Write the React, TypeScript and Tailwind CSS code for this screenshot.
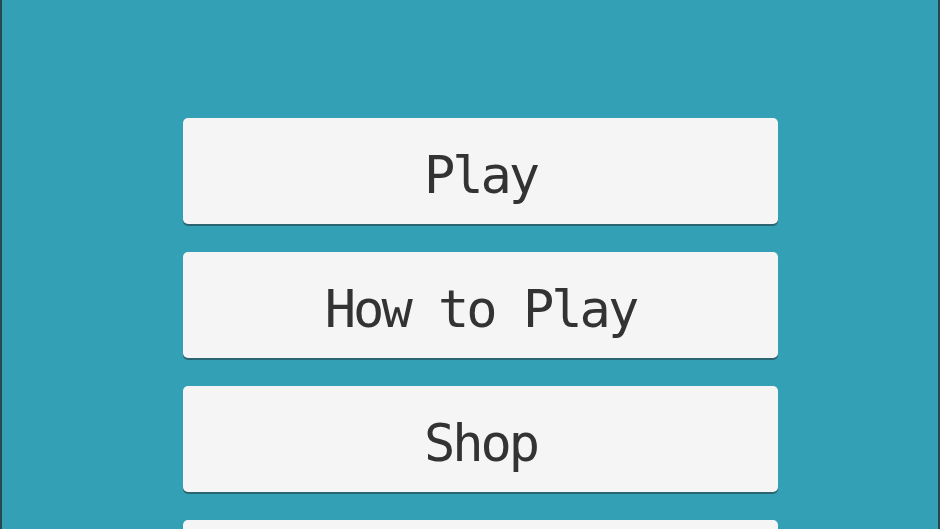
const MENU_ITEMS = ['Play', 'How to Play', 'Shop', 'Settings'];

export default function App() {
  return (
    <div className="h-[529px] w-full overflow-hidden border-x-2 border-[#27484f] bg-[#33a0b5]">
      <div className="flex flex-col items-center gap-[28px] pl-[21px] pt-[118px]">
        {MENU_ITEMS.map((label) => (
          <button
            key={label}
            className="flex h-[106px] w-[595px] shrink-0 items-center justify-center rounded-[5px] bg-[#f5f5f5] pt-[8px] text-[52px] tracking-[-3px] text-[#333333] shadow-[0_2px_0_#2b6572]"
            style={{ fontFamily: '"DejaVu Sans Mono", monospace' }}
          >
            {label}
          </button>
        ))}
      </div>
    </div>
  );
}
